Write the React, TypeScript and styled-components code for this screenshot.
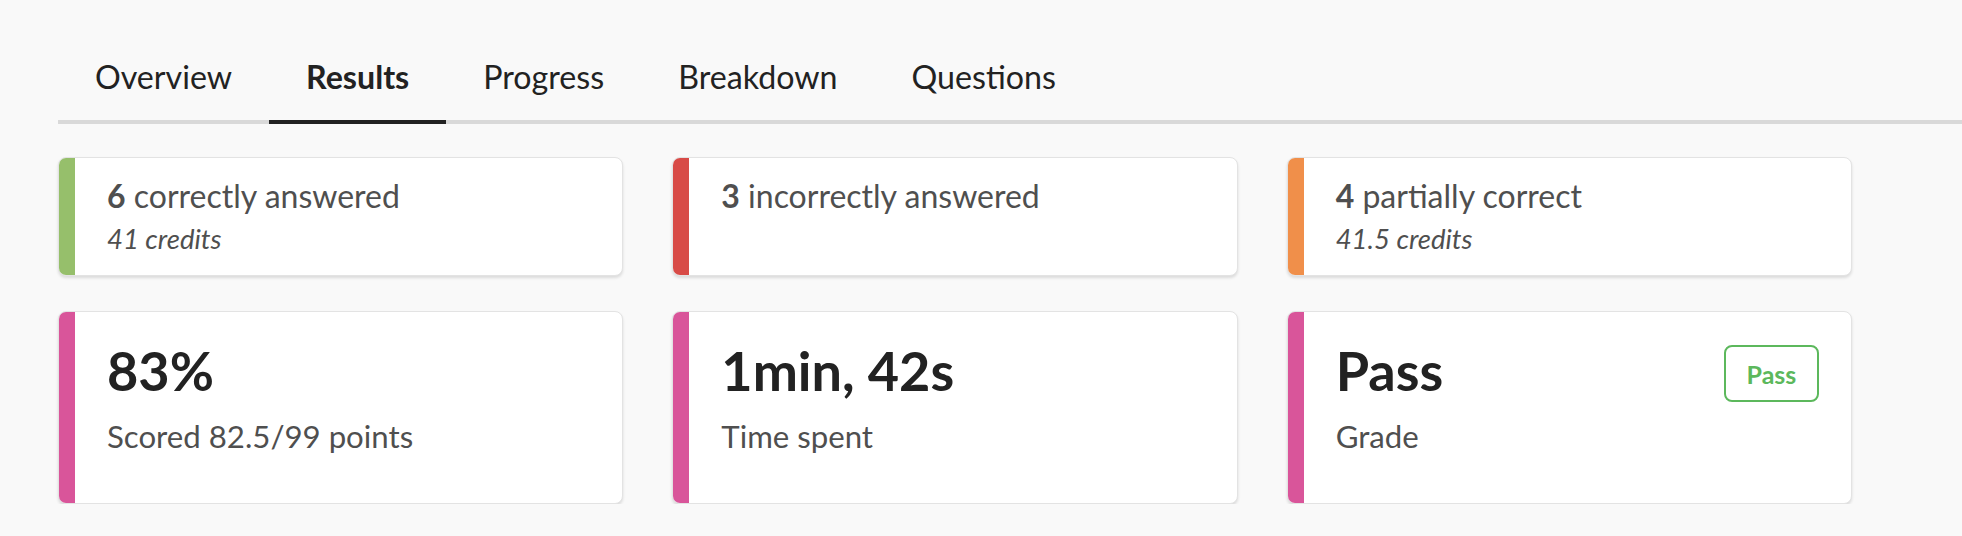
import React from 'react';
import styled, { createGlobalStyle } from 'styled-components';

const GlobalStyle = createGlobalStyle`
  html, body { margin: 0; padding: 0; background: #f9f9f9; }
  body { font-family: Lato, "Noto Sans", sans-serif; color: #4a4a4a; }
`;

const Page = styled.div`
  padding: 38px 0 0 58px;
`;

const TabBar = styled.div`
  display: flex;
  border-bottom: 4px solid #d9d9d9;
`;

const Tab = styled.div<{ $active?: boolean }>`
  padding: 20px 37px 24px;
  font-size: 32.2px;
  line-height: 38px;
  color: #222;
  font-weight: ${p => (p.$active ? 700 : 400)};
  border-bottom: 4px solid ${p => (p.$active ? '#222' : 'transparent')};
  margin-bottom: -4px;
`;

const Grid = styled.div`
  display: grid;
  grid-template-columns: repeat(3, 1fr);
  grid-template-rows: 119px 193px;
  column-gap: 49px;
  row-gap: 35px;
  margin-top: 33px;
  padding-right: 110px;
`;

const Card = styled.div`
  display: flex;
  background: #fff;
  border: 1px solid #e3e3e3;
  border-radius: 8px;
  box-shadow: 0 2px 3px rgba(0, 0, 0, 0.12);
  overflow: hidden;
`;

const Bar = styled.div<{ $color: string }>`
  width: 16px;
  flex: none;
  background: ${p => p.$color};
`;

const Body = styled.div<{ $top: number }>`
  flex: 1;
  display: flex;
  justify-content: space-between;
  align-items: flex-start;
  padding: ${p => p.$top}px 32px 0 32px;
`;

const Col = styled.div`
  display: flex;
  flex-direction: column;
`;

const Label = styled.div`
  font-size: 32px;
  line-height: 38px;
  color: #4f4f4f;
  b { font-weight: 700; }
`;

const Credits = styled.div`
  font-size: 27.5px;
  line-height: 34px;
  font-style: italic;
  color: #4f4f4f;
  margin-top: 7px;
`;

const Big = styled.div`
  font-size: 54px;
  line-height: 64px;
  font-weight: 700;
  color: #222;
`;

const Sub = styled.div`
  font-size: 31.2px;
  line-height: 36px;
  color: #4f4f4f;
  margin-top: 15px;
`;

const Badge = styled.div`
  margin-top: 6px;
  width: 95px;
  height: 57px;
  box-sizing: border-box;
  border: 2px solid #5cb85c;
  border-radius: 8px;
  color: #5cb85c;
  font-weight: 700;
  font-size: 25px;
  display: flex;
  align-items: center;
  justify-content: center;
`;

const tabs = ['Overview', 'Results', 'Progress', 'Breakdown', 'Questions'];

const counts = [
  { color: '#96bf6b', n: '6', text: 'correctly answered', credits: '41 credits' },
  { color: '#d84b47', n: '3', text: 'incorrectly answered', credits: '' },
  { color: '#f08f4a', n: '4', text: 'partially correct', credits: '41.5 credits' },
];

const stats = [
  { big: '83%', sub: 'Scored 82.5/99 points', badge: false },
  { big: '1min, 42s', sub: 'Time spent', badge: false },
  { big: 'Pass', sub: 'Grade', badge: true },
];

export default function App() {
  return (
    <>
      <GlobalStyle />
      <Page>
        <TabBar>
          {tabs.map(t => (
            <Tab key={t} $active={t === 'Results'}>{t}</Tab>
          ))}
        </TabBar>
        <Grid>
          {counts.map(c => (
            <Card key={c.text}>
              <Bar $color={c.color} />
              <Body $top={19}>
                <Col>
                  <Label><b>{c.n}</b> {c.text}</Label>
                  {c.credits && <Credits>{c.credits}</Credits>}
                </Col>
              </Body>
            </Card>
          ))}
          {stats.map(s => (
            <Card key={s.big}>
              <Bar $color="#d9559a" />
              <Body $top={27}>
                <Col>
                  <Big>{s.big}</Big>
                  <Sub>{s.sub}</Sub>
                </Col>
                {s.badge && <Badge>Pass</Badge>}
              </Body>
            </Card>
          ))}
        </Grid>
      </Page>
    </>
  );
}
